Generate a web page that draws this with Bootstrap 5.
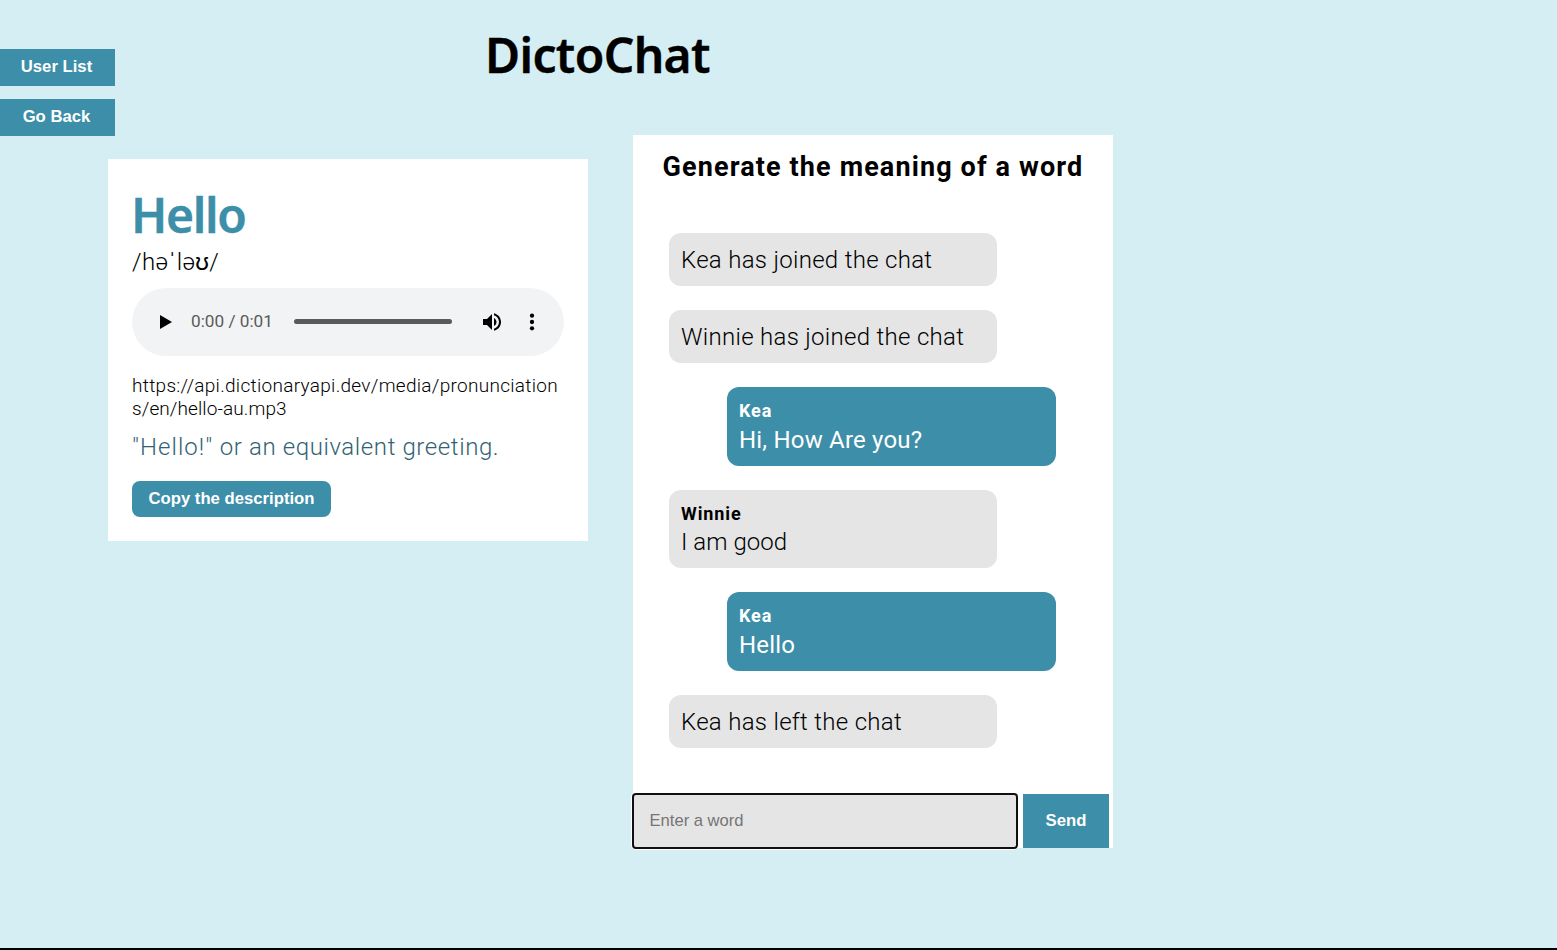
<!DOCTYPE html>
<html lang="en">
<head>
<meta charset="utf-8">
<meta name="viewport" content="width=device-width, initial-scale=1">
<title>DictoChat</title>
<link href="https://cdn.jsdelivr.net/npm/bootstrap@5.3.0/dist/css/bootstrap.min.css" rel="stylesheet">
<style>
:root{--teal:#3d8ea8;--grey:#e5e5e5}
body{height:950px;background:#d4eef3;border-bottom:2px solid #000;color:#000;font-family:Roboto,"Liberation Sans",sans-serif;font-weight:300;overflow:hidden}
.page-head{height:135px}
.side-menu{width:115px;padding-top:49px;gap:13px}
.btn-teal,.btn-teal:hover{background:var(--teal);color:#fff;border:0;font:bold 16.7px/20px "Liberation Sans",Arial,sans-serif;border-radius:0}
.side-menu .btn-teal{height:37px;padding:0 2px 2px 0;flex:none}
.app-title{margin:25px 0 0 370px;font:600 48px/60px "Noto Sans",sans-serif;letter-spacing:-.65px;white-space:nowrap;-webkit-text-stroke:.4px #000}
.board{padding-left:108px;gap:45px}
.word-card{width:480px;height:382px;margin-top:24px;padding:24px}
.word-name{font:600 48px/58px "Noto Sans",sans-serif;letter-spacing:-1.3px;color:var(--teal);margin:3px 0 0 -1px;-webkit-text-stroke:.4px var(--teal)}
.phonetic{font-size:24px;line-height:36px;letter-spacing:.4px;white-space:nowrap}
.player{height:68px;margin-top:8px;background:#f1f3f4;padding:0 0 1px 21px}
.time-text{font:400 17.2px/24px Roboto,sans-serif;color:#5a5a5a;width:103px;margin:-1px 0 0 14px;white-space:nowrap}
.track{width:158px;height:5px;background:#5a5a5a}
.volume{margin-left:27.5px}
.more{margin-left:16px}
.audio-url{font-size:19px;line-height:23px;letter-spacing:.3px;margin-top:18px;white-space:nowrap}
.audio-url .url-tail{letter-spacing:.1px}
.meaning{font-size:24px;line-height:36px;letter-spacing:.6px;color:#326273;margin-top:9px;white-space:nowrap}
.meaning q{quotes:none;letter-spacing:1.05px}
.word-card .btn-teal{width:199px;height:36px;border-radius:8px;margin-top:16px;padding:0 0 1px;white-space:nowrap}
.chat-card{width:480px;height:713px}
.chat-title{font:700 27px/36px Roboto,sans-serif;letter-spacing:1.12px;margin:14px 0 48px 29.5px;white-space:nowrap}
.messages{padding-left:36px;gap:24px;flex:1}
.bubble{width:328px;height:53px;background:var(--grey);border-radius:12px;padding:9px 12px;font-size:24px;line-height:37px;letter-spacing:.3px;white-space:nowrap}
.bubble.named{height:78.5px;padding-top:11px;line-height:30px;letter-spacing:.05px}
.bubble.mine{width:329px;margin-left:58px;background:var(--teal);color:#fff;font-weight:400;line-height:32px;letter-spacing:.2px}
.bubble strong{display:block;font-weight:700;font-size:18px;line-height:26px;letter-spacing:.9px}
.word-form{height:54px;gap:5px}
.word-form .form-control{width:386px;height:56px;margin:-1px 0 0 -1px;border:2px solid #101010;border-radius:4px;background:var(--grey);padding:0 15.5px 0;font:16.6px "Liberation Sans",Arial,sans-serif;box-shadow:0 0 0 1px #fff}
.word-form .form-control::placeholder{color:#757575}
.word-form .btn-teal{width:86px;height:54px;padding:5px 12px}
</style>
</head>
<body>
<header class="page-head d-flex align-items-start">
  <nav class="side-menu d-flex flex-column">
    <button class="btn btn-teal" type="button">User List</button>
    <button class="btn btn-teal" type="button">Go Back</button>
  </nav>
  <h1 class="app-title">DictoChat</h1>
</header>
<main class="board d-flex align-items-start">
  <section class="word-card bg-white">
    <h2 class="word-name">Hello</h2>
    <div class="phonetic">/həˈləʊ/</div>
    <div class="player d-flex align-items-center rounded-pill">
      <svg width="24" height="24" viewBox="0 0 24 24"><path d="M7 5v14l12-7z"/></svg>
      <span class="time-text">0:00 / 0:01</span>
      <div class="track rounded-pill"></div>
      <svg class="volume" width="24" height="24" viewBox="0 0 24 24"><path d="M3 9v6h4l5 5V4L7 9H3zm13.500 3c0-1.770-1.020-3.290-2.500-4.030v8.050c1.480-.730 2.500-2.250 2.500-4.020zM14 3.230v2.060c2.890.860 5 3.540 5 6.710s-2.110 5.850-5 6.710v2.060c4.010-.910 7-4.490 7-8.770s-2.990-7.860-7-8.770z"/></svg>
      <svg class="more" width="24" height="24" viewBox="0 0 24 24"><circle cx="12" cy="5.700" r="2.150"/><circle cx="12" cy="12" r="2.150"/><circle cx="12" cy="18.300" r="2.150"/></svg>
    </div>
    <div class="audio-url">https://api.dictionaryapi.dev/media/pronunciation<br><span class="url-tail">s/en/hello-au.mp3</span></div>
    <div class="meaning"><q>"Hello!"</q> or an equivalent greeting.</div>
    <button class="btn btn-teal" type="button">Copy the description</button>
  </section>
  <section class="chat-card bg-white d-flex flex-column">
    <h3 class="chat-title">Generate the meaning of a word</h3>
    <div class="messages d-flex flex-column">
      <div class="bubble">Kea has joined the chat</div>
      <div class="bubble">Winnie has joined the chat</div>
      <div class="bubble named mine"><strong>Kea</strong>Hi, How Are you?</div>
      <div class="bubble named"><strong>Winnie</strong>I am good</div>
      <div class="bubble named mine"><strong>Kea</strong>Hello</div>
      <div class="bubble">Kea has left the chat</div>
    </div>
    <form class="word-form d-flex">
      <input class="form-control" type="text" placeholder="Enter a word" aria-label="Enter a word">
      <button class="btn btn-teal" type="button">Send</button>
    </form>
  </section>
</main>
<script src="https://cdn.jsdelivr.net/npm/bootstrap@5.3.0/dist/js/bootstrap.bundle.min.js"></script>
</body>
</html>
